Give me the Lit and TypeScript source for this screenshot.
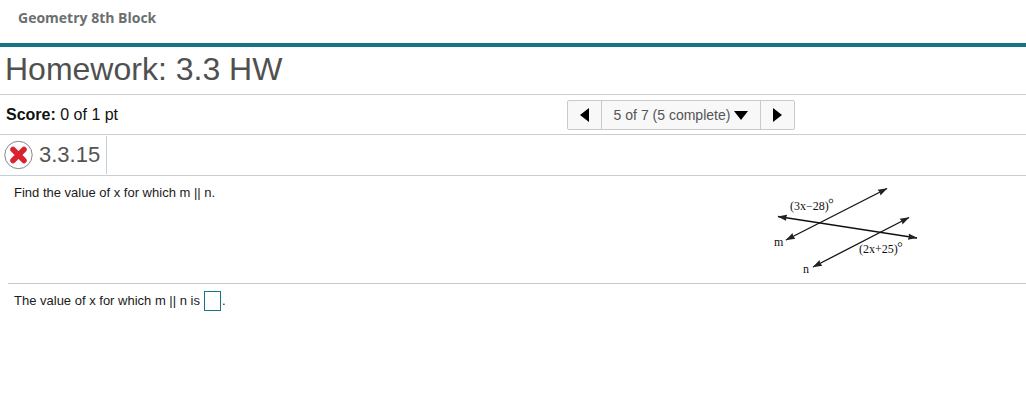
import { LitElement, html, css } from "lit";
import { customElement, property, state } from "lit/decorators.js";

@customElement("angle-figure")
class AngleFigure extends LitElement {
  static styles = css`
    :host { display: block; }
    .figure { display: block; width: 160px; height: 96px; }
    .line { stroke: #111; stroke-width: 1.3; }
    .label { font-family: "Liberation Serif", "Times New Roman", serif; font-size: 12px; fill: #111; }
    .degree { fill: none; stroke: #222; stroke-width: 0.8; }
  `;

  render() {
    return html`
      <svg class="figure" viewBox="768 183 160 96" role="img" aria-label="Lines m and n cut by a transversal">
        <defs>
          <marker id="head" markerUnits="userSpaceOnUse" markerWidth="10" markerHeight="8" refX="9" refY="4" orient="auto-start-reverse">
            <path d="M9.5 4 L0 0.8 L1 4 L0 7.2 Z" fill="#222" />
          </marker>
        </defs>
        <line class="line" x1="786" y1="240" x2="887" y2="188.500" marker-start="url(#head)" marker-end="url(#head)" />
        <line class="line" x1="778" y1="216.500" x2="917" y2="238" marker-start="url(#head)" marker-end="url(#head)" />
        <line class="line" x1="813" y1="267" x2="909" y2="217.500" marker-start="url(#head)" marker-end="url(#head)" />
        <text class="label" x="790" y="210">(3x−28)</text>
        <circle class="degree" cx="831" cy="201" r="1.9" />
        <text class="label" x="859" y="253">(2x+25)</text>
        <circle class="degree" cx="900" cy="244.500" r="1.9" />
        <text class="label" x="774" y="246">m</text>
        <text class="label" x="803" y="273">n</text>
      </svg>
    `;
  }
}

@customElement("question-pager")
class QuestionPager extends LitElement {
  @property({ type: Number }) current = 5;
  @property({ type: Number }) total = 7;
  @property({ type: Number }) complete = 5;

  static styles = css`
    :host { display: block; }
    .pager { display: flex; height: 30px; box-sizing: border-box; border: 1px solid #c8cbcd; border-radius: 2px; background: #f8f8f8; }
    .step, .pick {
      display: flex; align-items: center; justify-content: center;
      margin: 0; border: 0; padding: 0; background: none; cursor: pointer;
      font-family: "Liberation Sans", Arial, sans-serif; font-size: 14px; line-height: 16px; color: #555;
    }
    .step { width: 33px; }
    .pick { width: 160px; gap: 4px; border: solid #c8cbcd; border-width: 0 1px; }
    .icon { display: block; flex: none; fill: #000; }
    .down { padding-top: 2px; }
  `;

  render() {
    return html`
      <nav class="pager" aria-label="Questions">
        <button class="step" aria-label="Previous question">
          <svg class="icon" width="9" height="14" viewBox="0 0 9 14"><path d="M9 0 V14 L0 7 Z" /></svg>
        </button>
        <button class="pick" aria-haspopup="listbox">
          <span>${this.current} of ${this.total} (${this.complete} complete)</span>
          <svg class="icon down" width="14" height="9" viewBox="0 0 14 9"><path d="M0 0 H14 L7 9 Z" /></svg>
        </button>
        <button class="step" aria-label="Next question">
          <svg class="icon" width="9" height="14" viewBox="0 0 9 14"><path d="M0 0 V14 L9 7 Z" /></svg>
        </button>
      </nav>
    `;
  }
}

@customElement("app-root")
class AppRoot extends LitElement {
  @state() private answer = "";

  static styles = css`
    :host { display: block; font-family: "Liberation Sans", Arial, sans-serif; color: #1a1a1a; background: #fff; }
    .course {
      padding: 8px 18px 15px; border-bottom: 4px solid #167585;
      font-family: "Open Sans", "Noto Sans", sans-serif; font-size: 14px; line-height: 20px; font-weight: 700; color: #6a7070;
    }
    .title { margin: 0; padding: 2px 5px 5px; font-size: 32px; line-height: 40px; font-weight: 400; color: #505050; }
    .bar { display: flex; align-items: center; justify-content: space-between; height: 39px; padding: 0 231px 0 6px; border-top: 1px solid #c8cfd4; }
    .score { font-size: 16px; line-height: 20px; color: #111; }
    .number { display: flex; height: 40px; border: solid #c8cfd4; border-width: 1px 0; }
    .item { display: flex; align-items: center; gap: 6px; margin: 1px 0; padding: 0 6px 0 4px; border-right: 1px solid #c8cfd4; }
    .wrong { display: block; }
    .id { margin: 0; font-size: 22px; line-height: 28px; font-weight: 400; color: #555; }
    .question { display: flex; justify-content: space-between; padding: 7px 98px 4px 14px; font-size: 13px; line-height: 20px; }
    .text { margin: 0; }
    .answer { display: flex; align-items: center; margin-left: 8px; padding: 7px 6px; border-top: 1px solid #c8c8d0; font-size: 13px; line-height: 20px; }
    .blank { width: 17px; height: 20px; box-sizing: border-box; margin: 0 1px 0 4px; border: 1px solid #167585; border-radius: 0; padding: 0; font: inherit; text-align: center; }
  `;

  private onInput(event: Event) {
    this.answer = (event.target as HTMLInputElement).value;
  }

  render() {
    return html`
      <header class="course">Geometry 8th Block</header>
      <main>
        <h1 class="title">Homework: 3.3 HW</h1>
        <div class="bar">
          <div class="score"><b>Score:</b> 0 of 1 pt</div>
          <question-pager></question-pager>
        </div>
        <div class="number">
          <div class="item">
            <svg class="wrong" width="29" height="30" viewBox="0 0 29 30" role="img" aria-label="Incorrect">
              <circle cx="14.5" cy="15" r="13.7" fill="#fff" stroke="#888" />
              <path d="M9 9.500 L20 20.500 M20 9.500 L9 20.500" stroke="#d9232e" stroke-width="5.5" stroke-linecap="round" />
            </svg>
            <h2 class="id">3.3.15</h2>
          </div>
        </div>
        <section class="question">
          <p class="text">Find the value of x for which m || n.</p>
          <angle-figure></angle-figure>
        </section>
        <div class="answer">
          <label for="x-value">The value of x for which m || n is</label>
          <input class="blank" id="x-value" type="text" autocomplete="off" .value=${this.answer} @input=${this.onInput} />
          <span>.</span>
        </div>
      </main>
    `;
  }
}
